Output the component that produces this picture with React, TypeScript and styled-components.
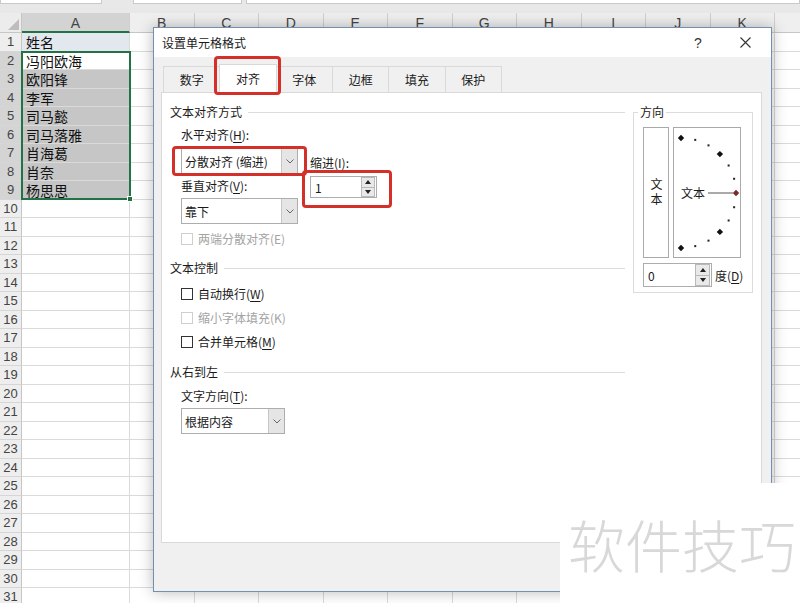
import React from "react";
import styled, { createGlobalStyle } from "styled-components";

const UI = `"Noto Sans CJK SC", "Noto Sans", sans-serif`;
const NUM = `"Liberation Sans", "Noto Sans", sans-serif`;

const GlobalStyle = createGlobalStyle`
  html, body { margin: 0; padding: 0; background: #fff; }
  body { font-family: ${UI}; overflow: hidden; }
  *, *::before, *::after { box-sizing: border-box; }
`;

const Page = styled.div`
  position: relative;
  width: 800px;
  height: 603px;
  overflow: hidden;
  background: #fff;
`;

/* ---------------- spreadsheet ---------------- */
const Sheet = styled.div`
  display: flex;
  flex-direction: column;
`;

const TopStrip = styled.div`
  height: 13px;
  background: #e8e8e8;
  display: flex;
  align-items: flex-start;
  flex: none;
`;

const FieldBox = styled.div<{ $w?: number; $ml?: number }>`
  height: 4px;
  background: #fff;
  border: 1px solid #c9c9c9;
  border-top: none;
  width: ${(p) => (p.$w ? `${p.$w}px` : "auto")};
  flex: ${(p) => (p.$w ? "none" : "1")};
  margin-left: ${(p) => p.$ml ?? 0}px;
`;

const Grid = styled.div`
  position: relative;
  display: grid;
  grid-template-columns: 22px 108px repeat(11, 64.5px);
  grid-template-rows: 20px repeat(31, 18.5px);
  width: max-content;
`;

const Corner = styled.div`
  position: relative;
  background: #ececec;
  border-right: 1px solid #c6c6c6;
  border-bottom: 1px solid #c6c6c6;
  &::after {
    content: "";
    position: absolute;
    right: 2px;
    bottom: 2px;
    width: 11px;
    height: 11px;
    background: #bdbdbd;
    clip-path: polygon(100% 0, 100% 100%, 0 100%);
  }
`;

const ColHead = styled.div<{ $active?: boolean }>`
  background: ${(p) => (p.$active ? "#d3d3d3" : "#efefef")};
  border-right: 1px solid #d0d0d0;
  border-bottom: ${(p) => (p.$active ? "2px solid #217346" : "1px solid #c6c6c6")};
  font-family: ${NUM};
  font-size: 14px;
  color: #444;
  text-align: center;
  line-height: 20px;
`;

const RowHead = styled.div<{ $active?: boolean }>`
  background: ${(p) => (p.$active ? "#d4d4d4" : "#eeeeee")};
  border-right: 1px solid #c6c6c6;
  border-bottom: 1px solid #d6d6d6;
  font-family: ${NUM};
  font-size: 13px;
  color: #444;
  text-align: center;
  line-height: 18px;
`;

const Cell = styled.div<{ $bg?: string }>`
  background: ${(p) => p.$bg ?? "#fff"};
  border-right: 1px solid #dadada;
  border-bottom: 1px solid #dadada;
  font-family: ${UI};
  font-size: 14px;
  color: #111;
  padding-left: 4px;
  line-height: 18px;
  white-space: nowrap;
`;

const Selection = styled.div`
  position: absolute;
  left: 21px;
  top: 37.5px;
  width: 110px;
  height: 149px;
  border: 2px solid #217346;
  pointer-events: none;
`;

const Handle = styled.div`
  position: absolute;
  right: -4px;
  bottom: -4px;
  width: 6px;
  height: 6px;
  background: #217346;
  border: 1px solid #fff;
`;

/* ---------------- dialog ---------------- */
const Dialog = styled.div`
  position: absolute;
  left: 153px;
  top: 27px;
  width: 619px;
  height: 565px;
  border: 1px solid #7190b0;
  background: #f0f0f0;
  box-shadow: 0 0 14px rgba(0, 0, 0, 0.28);
  display: flex;
  flex-direction: column;
  font-family: ${UI};
  font-size: 12px;
  color: #1a1a1a;
`;

const TitleBar = styled.div`
  height: 29px;
  flex: none;
  background: #fff;
  display: flex;
  align-items: center;
  padding-left: 8px;
`;

const Title = styled.div`
  flex: 1;
  font-size: 12px;
`;

const TitleBtn = styled.div<{ $mr: number }>`
  width: 46px;
  height: 29px;
  margin-right: ${(p) => p.$mr}px;
  display: flex;
  align-items: center;
  justify-content: center;
  font-family: ${NUM};
  font-size: 14px;
  color: #333;
`;

const Body = styled.div`
  flex: 1;
  display: flex;
  flex-direction: column;
  padding: 9px 9px 0 7px;
`;

const TabStrip = styled.div`
  display: flex;
  align-items: flex-end;
  height: 27px;
  padding-left: 2px;
  margin-bottom: -1px;
`;

const Tab = styled.div<{ $active?: boolean }>`
  position: relative;
  width: 57.33px;
  height: ${(p) => (p.$active ? "29px" : "27px")};
  margin-left: -1px;
  z-index: ${(p) => (p.$active ? 2 : "auto")};
  background: ${(p) => (p.$active ? "#fff" : "#f0f0f0")};
  border: 1px solid #d9d9d9;
  border-bottom: none;
  display: flex;
  align-items: center;
  justify-content: center;
  padding-bottom: ${(p) => (p.$active ? "2px" : "1px")};
  &:first-child {
    margin-left: 0;
  }
`;

const Annot = styled.div<{ $l: number; $r: number; $t: number; $b: number }>`
  position: absolute;
  left: ${(p) => p.$l}px;
  right: ${(p) => p.$r}px;
  top: ${(p) => p.$t}px;
  bottom: ${(p) => p.$b}px;
  border: 3px solid #d3302a;
  border-radius: 4px;
  pointer-events: none;
  z-index: 5;
`;

const Panel = styled.div`
  position: relative;
  z-index: 1;
  height: 451px;
  background: #fff;
  border: 1px solid #d9d9d9;
  display: flex;
  gap: 8px;
  padding: 11px 8px 0 8px;
`;

const LeftCol = styled.div`
  flex: 1;
  display: flex;
  flex-direction: column;
`;

const SectionHeader = styled.div<{ $mt?: number }>`
  display: flex;
  align-items: center;
  gap: 6px;
  line-height: 16px;
  margin-top: ${(p) => p.$mt ?? 0}px;
  &::after {
    content: "";
    flex: 1;
    height: 1px;
    background: #dcdcdc;
  }
`;

const Indented = styled.div`
  padding-left: 11px;
  display: flex;
  flex-direction: column;
`;

const AlignGrid = styled.div`
  display: grid;
  grid-template-columns: 117px 67px;
  column-gap: 12px;
  margin-top: 7px;
  padding-left: 11px;
`;

const Column = styled.div`
  display: flex;
  flex-direction: column;
  align-items: flex-start;
`;

const FieldLabel = styled.div<{ $mt?: number }>`
  line-height: 16px;
  margin-top: ${(p) => p.$mt ?? 0}px;
  white-space: nowrap;
`;

const U = styled.span`
  text-decoration: underline;
  text-underline-offset: 2px;
`;

const SelectBox = styled.div<{ $w: number; $mt?: number }>`
  position: relative;
  width: ${(p) => p.$w}px;
  height: 26px;
  margin-top: ${(p) => p.$mt ?? 0}px;
  border: 1px solid #adadad;
  background: #fff;
  display: flex;
`;

const SelectText = styled.div`
  flex: 1;
  padding-left: 3px;
  display: flex;
  align-items: center;
  white-space: nowrap;
`;

const SelectArrow = styled.div`
  width: 16px;
  background: #e5e5e5;
  border-left: 1px solid #c6c6c6;
  display: flex;
  align-items: center;
  justify-content: center;
`;

const SpinBox = styled.div<{ $w: number; $h: number; $mt?: number }>`
  position: relative;
  width: ${(p) => p.$w}px;
  height: ${(p) => p.$h}px;
  margin-top: ${(p) => p.$mt ?? 0}px;
  border: 1px solid #adadad;
  background: #fff;
  display: flex;
  flex: none;
`;

const SpinText = styled.div`
  flex: 1;
  padding-left: 4px;
  display: flex;
  align-items: center;
`;

const SpinBtns = styled.div<{ $w: number }>`
  width: ${(p) => p.$w}px;
  margin: 0 1px 0 0;
  display: flex;
  flex-direction: column;
`;

const SpinBtn = styled.div<{ $down?: boolean }>`
  flex: 1;
  background: #e9e9e9;
  border: 1px solid #b9b9b9;
  margin-top: ${(p) => (p.$down ? "-1px" : "0")};
  display: flex;
  align-items: center;
  justify-content: center;
  &::after {
    content: "";
    width: 0;
    height: 0;
    border-left: 3.5px solid transparent;
    border-right: 3.5px solid transparent;
    ${(p) => (p.$down ? "border-top: 4px solid #222;" : "border-bottom: 4px solid #222;")}
  }
`;

const CheckList = styled.div<{ $mt?: number }>`
  display: flex;
  flex-direction: column;
  gap: 8px;
  margin-top: ${(p) => p.$mt ?? 0}px;
`;

const CheckRow = styled.div<{ $disabled?: boolean; $mt?: number }>`
  display: flex;
  align-items: center;
  gap: 5px;
  line-height: 16px;
  margin-top: ${(p) => p.$mt ?? 0}px;
  color: ${(p) => (p.$disabled ? "#a3a3a3" : "#1a1a1a")};
  white-space: nowrap;
`;

const CheckBox = styled.span<{ $disabled?: boolean }>`
  width: 12px;
  height: 12px;
  border: 1px solid ${(p) => (p.$disabled ? "#cfcfcf" : "#333")};
  background: #fff;
  flex: none;
`;

const OrientGroup = styled.div`
  position: relative;
  width: 120px;
  height: 181px;
  margin-top: 8px;
  border: 1px solid #dcdcdc;
  padding: 14px 0 0 9px;
  display: flex;
  flex-direction: column;
`;

const GroupTitle = styled.span`
  position: absolute;
  top: -9px;
  left: 4px;
  padding: 0 2px;
  background: #fff;
  line-height: 16px;
`;

const OrientRow = styled.div`
  display: flex;
  gap: 4px;
`;

const VertBox = styled.div`
  width: 26px;
  height: 131px;
  border: 1px solid #a9a9a9;
  display: flex;
  align-items: center;
  justify-content: center;
`;

const VertText = styled.span`
  writing-mode: vertical-rl;
  text-orientation: upright;
  letter-spacing: 3px;
  line-height: 1;
`;

const DialBox = styled.div`
  width: 68px;
  height: 131px;
  border: 1px solid #a9a9a9;
  svg {
    display: block;
  }
`;

const OrientSpinRow = styled.div`
  display: flex;
  align-items: center;
  gap: 3px;
  margin-top: 5px;
`;

/* ---------------- watermark ---------------- */
const Watermark = styled.div`
  position: absolute;
  right: 0;
  bottom: 0;
  width: 240px;
  height: 120px;
  background: #fff;
  display: flex;
  align-items: center;
  padding-left: 8px;
  font-family: ${UI};
  font-size: 57px;
  font-weight: 300;
  line-height: 1;
  color: #d8d8d8;
  white-space: nowrap;
  z-index: 10;
`;

const Chevron = () => (
  <svg width="8" height="5" viewBox="0 0 8 5">
    <polyline points="0.5,0.5 4,4 7.5,0.5" fill="none" stroke="#666" strokeWidth="1" />
  </svg>
);

const CloseIcon = () => (
  <svg width="11" height="11" viewBox="0 0 11 11">
    <path d="M0.5 0.5 L10.5 10.5 M10.5 0.5 L0.5 10.5" stroke="#333" strokeWidth="1.1" fill="none" />
  </svg>
);

const Dial = () => {
  const cx = 7;
  const cy = 65;
  const r = 55;
  const pts = [];
  for (let a = 90; a >= -90; a -= 15) {
    const rad = (a * Math.PI) / 180;
    const x = cx + r * Math.cos(rad);
    const y = cy - r * Math.sin(rad);
    const big = a % 45 === 0;
    if (big) {
      const s = 3.2;
      pts.push(
        <polygon
          key={a}
          points={`${x},${y - s} ${x + s},${y} ${x},${y + s} ${x - s},${y}`}
          fill={a === 0 ? "#7a2a2a" : "#111"}
        />
      );
    } else {
      pts.push(<rect key={a} x={x - 1} y={y - 1} width={2} height={2} fill="#222" />);
    }
  }
  return (
    <svg width="66" height="129" viewBox="0 0 66 129">
      <line x1="34" y1={cy} x2="59" y2={cy} stroke="#555" strokeWidth="1" />
      <text x="7" y={cy + 4.5} fontSize="12" fill="#1a1a1a" fontFamily={UI}>
        文本
      </text>
      {pts}
    </svg>
  );
};

const names = ["姓名", "冯阳欧海", "欧阳锋", "李军", "司马懿", "司马落雅", "肖海葛", "肖奈", "杨思思"];
const cols = ["A", "B", "C", "D", "E", "F", "G", "H", "I", "J", "K", "L"];
const tabs = ["数字", "对齐", "字体", "边框", "填充", "保护"];

const cellBg = (row: number, col: string) => {
  if (col !== "A") return undefined;
  if (row === 1) return "#e2e8ee";
  if (row >= 3 && row <= 9) return "#c6c6c6";
  return undefined;
};

export default function App() {
  return (
    <>
      <GlobalStyle />
      <Page>
        <Sheet>
          <TopStrip>
            <FieldBox $w={102} />
            <FieldBox $w={109} $ml={31} />
            <FieldBox $ml={4} />
          </TopStrip>
          <Grid>
            <Corner />
            {cols.map((c) => (
              <ColHead key={c} $active={c === "A"}>
                {c === "L" ? "" : c}
              </ColHead>
            ))}
            {Array.from({ length: 31 }, (_, i) => {
              const r = i + 1;
              return (
                <React.Fragment key={r}>
                  <RowHead $active={r >= 2 && r <= 9}>{r}</RowHead>
                  {cols.map((c) => (
                    <Cell key={c} $bg={cellBg(r, c)}>
                      {c === "A" ? names[r - 1] ?? "" : ""}
                    </Cell>
                  ))}
                </React.Fragment>
              );
            })}
            <Selection>
              <Handle />
            </Selection>
          </Grid>
        </Sheet>

        <Dialog>
          <TitleBar>
            <Title>设置单元格格式</Title>
            <TitleBtn $mr={1}>?</TitleBtn>
            <TitleBtn $mr={3}>
              <CloseIcon />
            </TitleBtn>
          </TitleBar>
          <Body>
            <TabStrip>
              {tabs.map((t) => (
                <Tab key={t} $active={t === "对齐"}>
                  {t}
                  {t === "对齐" && <Annot $l={-6} $r={-5} $t={-9} $b={-2} />}
                </Tab>
              ))}
            </TabStrip>
            <Panel>
              <LeftCol>
                <SectionHeader>文本对齐方式</SectionHeader>
                <AlignGrid>
                  <Column>
                    <FieldLabel>
                      水平对齐(<U>H</U>):
                    </FieldLabel>
                    <SelectBox $w={117} $mt={5}>
                      <SelectText>分散对齐 (缩进)</SelectText>
                      <SelectArrow>
                        <Chevron />
                      </SelectArrow>
                      <Annot $l={-10} $r={-10} $t={-3} $b={-3} />
                    </SelectBox>
                    <FieldLabel $mt={4}>
                      垂直对齐(<U>V</U>):
                    </FieldLabel>
                    <SelectBox $w={117} $mt={4}>
                      <SelectText>靠下</SelectText>
                      <SelectArrow>
                        <Chevron />
                      </SelectArrow>
                    </SelectBox>
                    <CheckRow $disabled $mt={7}>
                      <CheckBox $disabled />
                      <span>两端分散对齐(E)</span>
                    </CheckRow>
                  </Column>
                  <Column>
                    <FieldLabel $mt={28}>
                      缩进(<U>I</U>):
                    </FieldLabel>
                    <SpinBox $w={67} $h={22} $mt={5}>
                      <SpinText>1</SpinText>
                      <SpinBtns $w={14}>
                        <SpinBtn />
                        <SpinBtn $down />
                      </SpinBtns>
                      <Annot $l={-9} $r={-16} $t={-7} $b={-11} />
                    </SpinBox>
                  </Column>
                </AlignGrid>

                <SectionHeader $mt={13}>文本控制</SectionHeader>
                <Indented>
                  <CheckList $mt={10}>
                    <CheckRow>
                      <CheckBox />
                      <span>
                        自动换行(<U>W</U>)
                      </span>
                    </CheckRow>
                    <CheckRow $disabled>
                      <CheckBox $disabled />
                      <span>缩小字体填充(K)</span>
                    </CheckRow>
                    <CheckRow>
                      <CheckBox />
                      <span>
                        合并单元格(<U>M</U>)
                      </span>
                    </CheckRow>
                  </CheckList>
                </Indented>

                <SectionHeader $mt={14}>从右到左</SectionHeader>
                <Indented>
                  <FieldLabel $mt={8}>
                    文字方向(<U>T</U>):
                  </FieldLabel>
                  <SelectBox $w={104} $mt={4}>
                    <SelectText>根据内容</SelectText>
                    <SelectArrow>
                      <Chevron />
                    </SelectArrow>
                  </SelectBox>
                </Indented>
              </LeftCol>

              <OrientGroup>
                <GroupTitle>方向</GroupTitle>
                <OrientRow>
                  <VertBox>
                    <VertText>文本</VertText>
                  </VertBox>
                  <DialBox>
                    <Dial />
                  </DialBox>
                </OrientRow>
                <OrientSpinRow>
                  <SpinBox $w={69} $h={24}>
                    <SpinText>0</SpinText>
                    <SpinBtns $w={15}>
                      <SpinBtn />
                      <SpinBtn $down />
                    </SpinBtns>
                  </SpinBox>
                  <span>
                    度(<U>D</U>)
                  </span>
                </OrientSpinRow>
              </OrientGroup>
            </Panel>
          </Body>
        </Dialog>

        <Watermark>软件技巧</Watermark>
      </Page>
    </>
  );
}
